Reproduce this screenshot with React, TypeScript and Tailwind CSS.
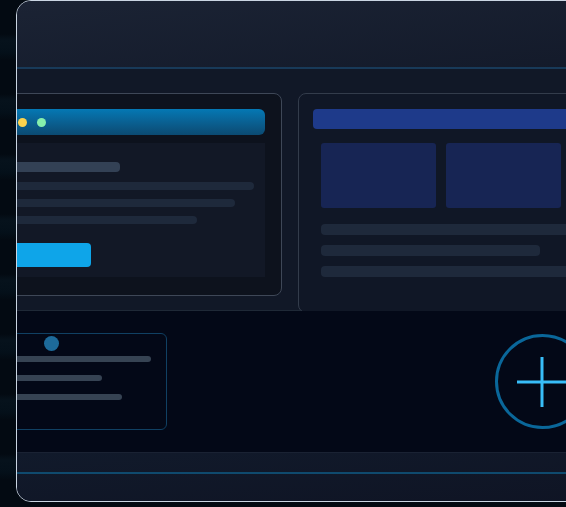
import React from "react";

const Bar = ({ className }: { className: string }) => <div className={className} />;

export default function App() {
  return (
    <div className="w-[566px] h-[507px] overflow-hidden bg-[#030a12] bg-[repeating-linear-gradient(180deg,#030a12_0px,#030a12_34px,#06121c_40px,#04101a_52px,#030a12_60px)]">
      <div className="ml-[16px] w-[620px] h-[502px] border border-slate-300 rounded-[15px] overflow-hidden flex flex-col bg-[#111827]">
        {/* header */}
        <div className="h-[68px] shrink-0 bg-gradient-to-br from-[#1b2334] to-[#131a2a] border-b-2 border-[#183a59]" />

        {/* main */}
        <div className="h-[242px] shrink-0 bg-[#111827] border-b border-[#1f2937] pt-[24px] flex items-start gap-[16px] ml-[-47px]">
          <div className="w-[312px] h-[203px] shrink-0 rounded-lg border border-[#3e4757] bg-[#0d121d] px-[16px] pt-[15px] flex flex-col gap-[8px]">
            <div className="h-[26px] rounded-md bg-gradient-to-b from-[#0478b4] to-[#0b4a72] flex items-center gap-[10px] px-[12px]">
              <span className="w-[9px] h-[9px] rounded-full bg-[#f87171]" />
              <span className="w-[9px] h-[9px] rounded-full bg-[#fcd34d]" />
              <span className="w-[9px] h-[9px] rounded-full bg-[#86efac]" />
            </div>
            <div className="h-[134px] bg-[#121826] px-[12px] pt-[19px] flex flex-col">
              <Bar className="h-[10px] w-[121px] rounded-sm bg-[#334155]" />
              <Bar className="h-[8px] w-[255px] mt-[10px] rounded-sm bg-[#1e293b]" />
              <Bar className="h-[8px] w-[236px] mt-[9px] rounded-sm bg-[#1e293b]" />
              <Bar className="h-[8px] w-[198px] mt-[9px] rounded-sm bg-[#1e293b]" />
              <Bar className="h-[24px] w-[92px] mt-[19px] rounded-[4px] bg-[#0ea5e9]" />
            </div>
          </div>

          <div className="w-[300px] h-[220px] shrink-0 rounded-lg border border-[#333c4b] bg-[#101726] px-[14px] pt-[15px] flex flex-col">
            <div className="h-[20px] rounded-[4px] bg-[#1e3a8a]" />
            <div className="mt-[14px] px-[8px] grid grid-cols-[115px_115px] gap-[10px]">
              <div className="h-[65px] rounded-[3px] bg-[#172554]" />
              <div className="h-[65px] rounded-[3px] bg-[#172554]" />
            </div>
            <div className="mt-[16px] px-[8px] flex flex-col gap-[10px]">
              <Bar className="h-[11px] w-full rounded-sm bg-[#1e293b]" />
              <Bar className="h-[11px] w-[219px] rounded-sm bg-[#1e293b]" />
              <Bar className="h-[11px] w-full rounded-sm bg-[#1e293b]" />
            </div>
          </div>
        </div>

        {/* bottom */}
        <div className="h-[141px] shrink-0 bg-[#030817] flex items-center ml-[-47px]">
          <div className="w-[197px] h-[97px] shrink-0 rounded-md border border-[#104063] px-[16px] pt-[2px] flex flex-col">
            <span className="ml-[57px] w-[15px] h-[15px] rounded-full bg-[#1d6a9a]" />
            <Bar className="mt-[5px] h-[6px] w-[164px] rounded-full bg-[#364353]" />
            <Bar className="mt-[13px] h-[6px] w-[115px] rounded-full bg-[#364353]" />
            <Bar className="mt-[13px] h-[6px] w-[135px] rounded-full bg-[#364353]" />
          </div>
          <div className="ml-[328px] w-[95px] h-[95px] shrink-0 rounded-full border-[3px] border-[#0a679a] flex items-center justify-center">
            <svg width="50" height="50" viewBox="0 0 50 50" className="ml-[-2px]">
              <path d="M25 0v50M0 25h50" stroke="#38bdf8" strokeWidth="3" />
            </svg>
          </div>
        </div>

        {/* footer */}
        <div className="flex-1 bg-gradient-to-br from-[#111a2b] to-[#0f1424] border-t border-[#1a2233] pt-[19px]">
          <div className="h-[2px] bg-[#0f4a6e]" />
        </div>
      </div>
    </div>
  );
}
